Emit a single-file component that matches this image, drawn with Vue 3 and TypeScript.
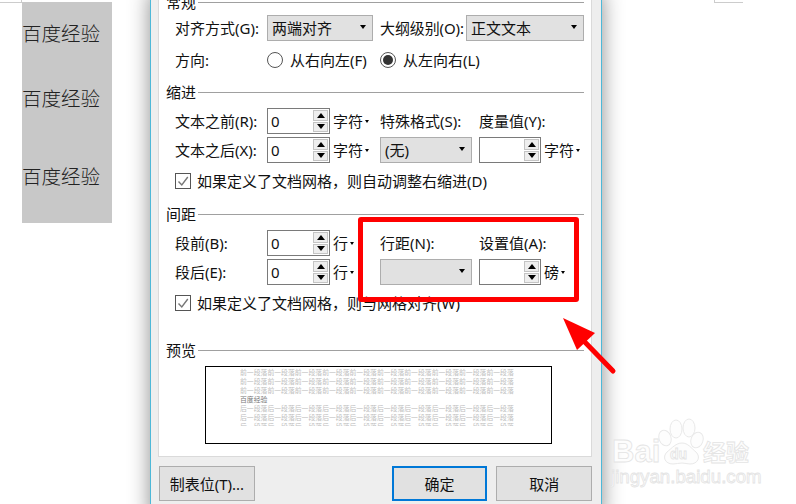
<script setup lang="ts">
const before = '前一段落'.repeat(10)
const after = '后一段落'.repeat(10)
const previewLines = [
  { text: before, cls: 'ghost' },
  { text: before, cls: 'ghost' },
  { text: before, cls: 'ghost' },
  { text: '百度经验', cls: 'sample' },
  { text: after, cls: 'ghost' },
  { text: after, cls: 'ghost' },
  { text: after, cls: 'ghost' },
]
</script>

<template>
  <div class="screen">
    <div class="page">
      <div class="mark mark-left"></div>
      <div class="sheet">
        <p class="doc-line first">百度经验</p>
        <p class="doc-line second">百度经验</p>
        <p class="doc-line third">百度经验</p>
      </div>
      <div class="mark mark-right"></div>
    </div>

    <div class="dialog">
      <div class="panel">
        <div class="heading"><span>常规</span><i></i></div>
        <div class="row row-first">
          <label class="label">对齐方式(G):</label>
          <div class="select w106"><span>两端对齐</span><b></b></div>
          <label class="label outline">大纲级别(O):</label>
          <div class="select w118"><span>正文文本</span><b></b></div>
        </div>
        <div class="row row-dir">
          <label class="label">方向:</label>
          <span class="radio"></span><span class="radio-text rtl">从右向左(F)</span>
          <span class="radio on"></span><span class="radio-text">从左向右(L)</span>
        </div>

        <div class="heading gap-head"><span>缩进</span><i></i></div>
        <div class="row row-after-head">
          <label class="label">文本之前(R):</label>
          <div class="spin"><span class="val">0</span><div class="btns"><em class="up"></em><em class="down"></em></div></div>
          <span class="unit wide">字符<b></b></span>
          <label class="label special">特殊格式(S):</label>
          <label class="label">度量值(Y):</label>
        </div>
        <div class="row row-tight">
          <label class="label">文本之后(X):</label>
          <div class="spin"><span class="val">0</span><div class="btns"><em class="up"></em><em class="down"></em></div></div>
          <span class="unit wide">字符<b></b></span>
          <div class="select w92"><span>(无)</span><b></b></div>
          <div class="spin short"><span class="val"></span><div class="btns"><em class="up"></em><em class="down"></em></div></div>
          <span class="unit">字符<b></b></span>
        </div>
        <div class="check-row check-high">
          <span class="check"><svg width="14" height="14" viewBox="0 0 14 14"><path d="M2.5 7.5 5.8 11 11.8 3" fill="none" stroke="#777" stroke-width="1.4" /></svg></span>
          <span>如果定义了文档网格，则自动调整右缩进(D)</span>
        </div>

        <div class="heading gap-head spacing-head"><span>间距</span><i></i></div>
        <div class="row row-after-head">
          <label class="label">段前(B):</label>
          <div class="spin"><span class="val">0</span><div class="btns"><em class="up"></em><em class="down"></em></div></div>
          <span class="unit wide">行<b></b></span>
          <label class="label special">行距(N):</label>
          <label class="label">设置值(A):</label>
        </div>
        <div class="row row-tight">
          <label class="label">段后(E):</label>
          <div class="spin"><span class="val">0</span><div class="btns"><em class="up"></em><em class="down"></em></div></div>
          <span class="unit wide">行<b></b></span>
          <div class="select w92"><span></span><b></b></div>
          <div class="spin short"><span class="val"></span><div class="btns"><em class="up"></em><em class="down"></em></div></div>
          <span class="unit">磅<b></b></span>
        </div>
        <div class="check-row check-low">
          <span class="check"><svg width="14" height="14" viewBox="0 0 14 14"><path d="M2.5 7.5 5.8 11 11.8 3" fill="none" stroke="#777" stroke-width="1.4" /></svg></span>
          <span>如果定义了文档网格，则与网格对齐(W)</span>
        </div>

        <div class="heading preview-head"><span>预览</span><i></i></div>
        <div class="preview">
          <div class="preview-text">
            <div v-for="(line, i) in previewLines" :key="i" :class="line.cls">{{ line.text }}</div>
          </div>
        </div>
      </div>

      <div class="footer">
        <button class="btn">制表位(T)...</button>
        <button class="btn primary">确定</button>
        <button class="btn">取消</button>
      </div>
    </div>

    <!-- annotations painted on top of the screenshot -->
    <div class="red-box"></div>
    <svg class="arrow" width="796" height="504" viewBox="0 0 796 504">
      <path d="M613 371 578 335" stroke="#f00" stroke-width="5" stroke-linecap="round" fill="none" />
      <path d="M563 318 595 333 577 350Z" fill="#f00" />
    </svg>

    <svg class="watermark" width="160" height="85" viewBox="604 410 160 85">
      <g fill="#fdfdfd" stroke="#e9e9e9" stroke-width="1">
        <ellipse cx="665" cy="438" rx="6" ry="8" transform="rotate(-20 665 438)" />
        <ellipse cx="676" cy="429" rx="6" ry="9" />
        <ellipse cx="689" cy="428" rx="6" ry="9" />
        <ellipse cx="697" cy="440" rx="6" ry="8" transform="rotate(20 697 440)" />
        <path d="M682 443c6 0 9 5 14 9 5 5 2 12-6 12-3 0-5-1-8-1s-6 1-9 1c-8 0-11-7-6-12 5-4 9-9 15-9Z" />
      </g>
      <g class="mark-text" fill="#fdfdfd" stroke="#e4e4e4" stroke-width="0.8">
        <text x="612" y="462" font-size="31" font-weight="700">Bai</text>
        <text x="670" y="459" font-size="14" font-weight="700">du</text>
        <text x="703" y="461" font-size="23" font-weight="700">经验</text>
        <text x="611" y="483" font-size="18.7">jingyan.baidu.com</text>
      </g>
    </svg>
  </div>
</template>

<style>
html, body { margin: 0; background: #fff; }
</style>

<style scoped>
.screen {
  position: relative;
  width: 796px;
  height: 504px;
  overflow: hidden;
  background: #fff;
  color: #111;
  font-family: "Noto Sans", "Noto Sans CJK SC", sans-serif;
  font-size: 15px;
  line-height: 20px;
}

.page { display: flex; align-items: flex-start; }
.mark { height: 3px; box-sizing: border-box; border-bottom: 1px solid #ccc; }
.mark-left { width: 22px; border-right: 1px solid #ccc; }
.mark-right { width: 29px; margin-left: 602px; border-left: 1px solid #ccc; }
.sheet { width: 90px; height: 221px; margin-top: 2px; background: #c8c8c8; overflow: hidden; }
.doc-line {
  margin: 0;
  font-family: "Noto Sans CJK SC", sans-serif;
  font-size: 19.5px;
  font-weight: 300;
  line-height: 26px;
  color: #222;
  white-space: nowrap;
}
.first { margin-top: 18px; }
.second { margin-top: 39px; }
.third { margin-top: 52px; }

.dialog {
  position: absolute;
  left: 150px;
  top: -8px;
  width: 452px;
  box-sizing: border-box;
  padding: 0 9px 20px 7px;
  background: #eee;
  border-left: 1px solid #4db8d8;
  border-right: 1px solid #4db8d8;
  box-shadow: 0 0 20px rgba(0, 0, 0, 0.45);
}
.panel {
  width: 434px;
  height: 465px;
  box-sizing: border-box;
  padding: 0 7px;
  background: #fff;
  border: 1px solid #dadada;
  border-top: 0;
}

.heading { display: flex; align-items: center; gap: 2px; height: 20px; }
.heading i { flex: 1; height: 1px; background: #a0a0a0; }
.gap-head { margin-top: 12px; }
.spacing-head { margin-top: 13px; }
.preview-head { margin-top: 27px; }

.row { display: flex; align-items: center; height: 26px; padding-left: 9px; }
.row-first { margin-top: 3px; }
.row-dir { margin-top: 9px; height: 20px; }
.row-after-head { margin-top: 6px; }
.row-tight { margin-top: 3px; }

.label { white-space: nowrap; }
.row > .label:first-child { width: 92px; flex: none; }
.outline { width: 86px; margin-left: 7px; letter-spacing: -0.1px; }
.special { width: 99px; }

.select {
  display: flex;
  align-items: center;
  justify-content: space-between;
  height: 26px;
  box-sizing: border-box;
  padding: 0 6px 0 4px;
  background: #e1e1e1;
  border: 1px solid #adadad;
  flex: none;
}
.select b {
  width: 0;
  height: 0;
  margin-bottom: 2px;
  border-left: 3.5px solid transparent;
  border-right: 3.5px solid transparent;
  border-top: 4px solid #000;
}
.w106 { width: 106px; }
.w118 { width: 118px; }
.w92 { width: 92px; margin-right: 7px; }

.spin {
  display: flex;
  justify-content: space-between;
  width: 63px;
  height: 26px;
  box-sizing: border-box;
  padding: 1px 1px 1px 3px;
  border: 1px solid #7a7a7a;
  background: #fff;
  flex: none;
}
.spin.short { width: 62px; }
.val { line-height: 22px; }
.btns { display: flex; flex-direction: column; width: 15px; gap: 1px; }
.btns em {
  display: flex;
  align-items: center;
  justify-content: center;
  flex: 1;
  background: #eee;
  border: 1px solid #c4c4c4;
}
.btns em::after {
  content: "";
  width: 0;
  height: 0;
  border-left: 4px solid transparent;
  border-right: 4px solid transparent;
}
.up::after { border-bottom: 5px solid #000; }
.down::after { border-top: 5px solid #000; }

.unit { display: flex; align-items: center; gap: 2px; margin-left: 3px; white-space: nowrap; }
.unit.wide { width: 47px; flex: none; }
.unit b {
  width: 0;
  height: 0;
  border-left: 2.5px solid transparent;
  border-right: 2.5px solid transparent;
  border-top: 3px solid #000;
}

.radio {
  position: relative;
  width: 16px;
  height: 16px;
  box-sizing: border-box;
  border: 1px solid #555;
  border-radius: 50%;
  flex: none;
}
.radio.on::after {
  content: "";
  position: absolute;
  inset: 2px;
  border-radius: 50%;
  background: #333;
}
.radio-text { margin-left: 7px; white-space: nowrap; }
.rtl { width: 90px; flex: none; }

.check-row { display: flex; align-items: center; gap: 6px; height: 20px; padding-left: 9px; }
.check-high { margin-top: 8px; }
.check-low { margin-top: 8px; }
.check {
  display: flex;
  align-items: center;
  justify-content: center;
  width: 16px;
  height: 16px;
  box-sizing: border-box;
  border: 1px solid #555;
}

.preview {
  width: 347px;
  height: 78px;
  box-sizing: border-box;
  margin: 6px 0 0 39px;
  padding: 1px 0 0 34px;
  border: 1px solid #000;
}
.preview-text {
  width: 276px;
  height: 58px;
  overflow: hidden;
  font-family: "Noto Sans CJK SC", sans-serif;
  font-size: 6.85px;
  line-height: 9px;
  white-space: nowrap;
}
.ghost { color: #c0c0c0; }
.sample { color: #777; }

.footer { display: flex; margin-top: 9px; padding-left: 1px; }
.btn {
  width: 96px;
  height: 35px;
  box-sizing: border-box;
  padding: 0;
  background: #e1e1e1;
  border: 1px solid #adadad;
  color: #111;
  font: inherit;
}
.primary { margin-left: 137px; border: 2px solid #0078d7; }
.primary + .btn { margin-left: 9px; }

.red-box {
  position: absolute;
  left: 358px;
  top: 217px;
  width: 221px;
  height: 85px;
  box-sizing: border-box;
  border: 5px solid #f00;
  border-radius: 3px;
}
.arrow { position: absolute; left: 0; top: 0; pointer-events: none; }
.watermark { position: absolute; left: 604px; top: 410px; pointer-events: none; }
.mark-text { font-family: "Liberation Sans", "Noto Sans CJK SC", sans-serif; }
</style>
